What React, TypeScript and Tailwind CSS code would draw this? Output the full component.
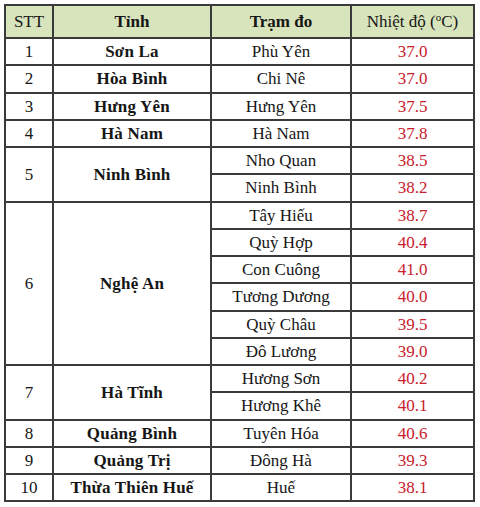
import React from "react";

type Station = { name: string; temp: string };
type Row = { stt: string; province: string; stations: Station[] };

const data: Row[] = [
  { stt: "1", province: "Sơn La", stations: [{ name: "Phù Yên", temp: "37.0" }] },
  { stt: "2", province: "Hòa Bình", stations: [{ name: "Chi Nê", temp: "37.0" }] },
  { stt: "3", province: "Hưng Yên", stations: [{ name: "Hưng Yên", temp: "37.5" }] },
  { stt: "4", province: "Hà Nam", stations: [{ name: "Hà Nam", temp: "37.8" }] },
  {
    stt: "5",
    province: "Ninh Bình",
    stations: [
      { name: "Nho Quan", temp: "38.5" },
      { name: "Ninh Bình", temp: "38.2" },
    ],
  },
  {
    stt: "6",
    province: "Nghệ An",
    stations: [
      { name: "Tây Hiếu", temp: "38.7" },
      { name: "Quỳ Hợp", temp: "40.4" },
      { name: "Con Cuông", temp: "41.0" },
      { name: "Tương Dương", temp: "40.0" },
      { name: "Quỳ Châu", temp: "39.5" },
      { name: "Đô Lương", temp: "39.0" },
    ],
  },
  {
    stt: "7",
    province: "Hà Tĩnh",
    stations: [
      { name: "Hương Sơn", temp: "40.2" },
      { name: "Hương Khê", temp: "40.1" },
    ],
  },
  { stt: "8", province: "Quảng Bình", stations: [{ name: "Tuyên Hóa", temp: "40.6" }] },
  { stt: "9", province: "Quảng Trị", stations: [{ name: "Đông Hà", temp: "39.3" }] },
  { stt: "10", province: "Thừa Thiên Huế", stations: [{ name: "Huế", temp: "38.1" }] },
];

const cell = "border-2 border-[#3a3a3a] text-center align-middle p-0 leading-none";

export default function App() {
  return (
    <div className="w-[480px] h-[507px] bg-white pt-[4px] pl-[4px] text-[#161616] text-[17px] font-['Liberation_Serif','Times_New_Roman',serif]">
      <table className="table-fixed border-collapse w-[469px]">
        <colgroup>
          <col className="w-[48px]" />
          <col className="w-[158px]" />
          <col className="w-[140px]" />
          <col className="w-[123px]" />
        </colgroup>
        <thead>
          <tr className="h-[33px] bg-[#d8e4bc]">
            <th className={`${cell} font-normal`}>STT</th>
            <th className={`${cell} font-bold`}>Tỉnh</th>
            <th className={`${cell} font-bold`}>Trạm đo</th>
            <th className={`${cell} font-normal`}>
              Nhiệt độ (<span className="text-[11px] relative -top-[6px]">o</span>C)
            </th>
          </tr>
        </thead>
        <tbody>
          {data.map((row) =>
            row.stations.map((s, i) => (
              <tr key={row.stt + "-" + i} className="h-[27.25px]">
                {i === 0 && (
                  <>
                    <td className={cell} rowSpan={row.stations.length}>
                      {row.stt}
                    </td>
                    <td className={`${cell} font-bold tracking-[0.2px]`} rowSpan={row.stations.length}>
                      {row.province}
                    </td>
                  </>
                )}
                <td className={cell}>{s.name}</td>
                <td className={`${cell} text-[#c8202c]`}>{s.temp}</td>
              </tr>
            ))
          )}
        </tbody>
      </table>
    </div>
  );
}
